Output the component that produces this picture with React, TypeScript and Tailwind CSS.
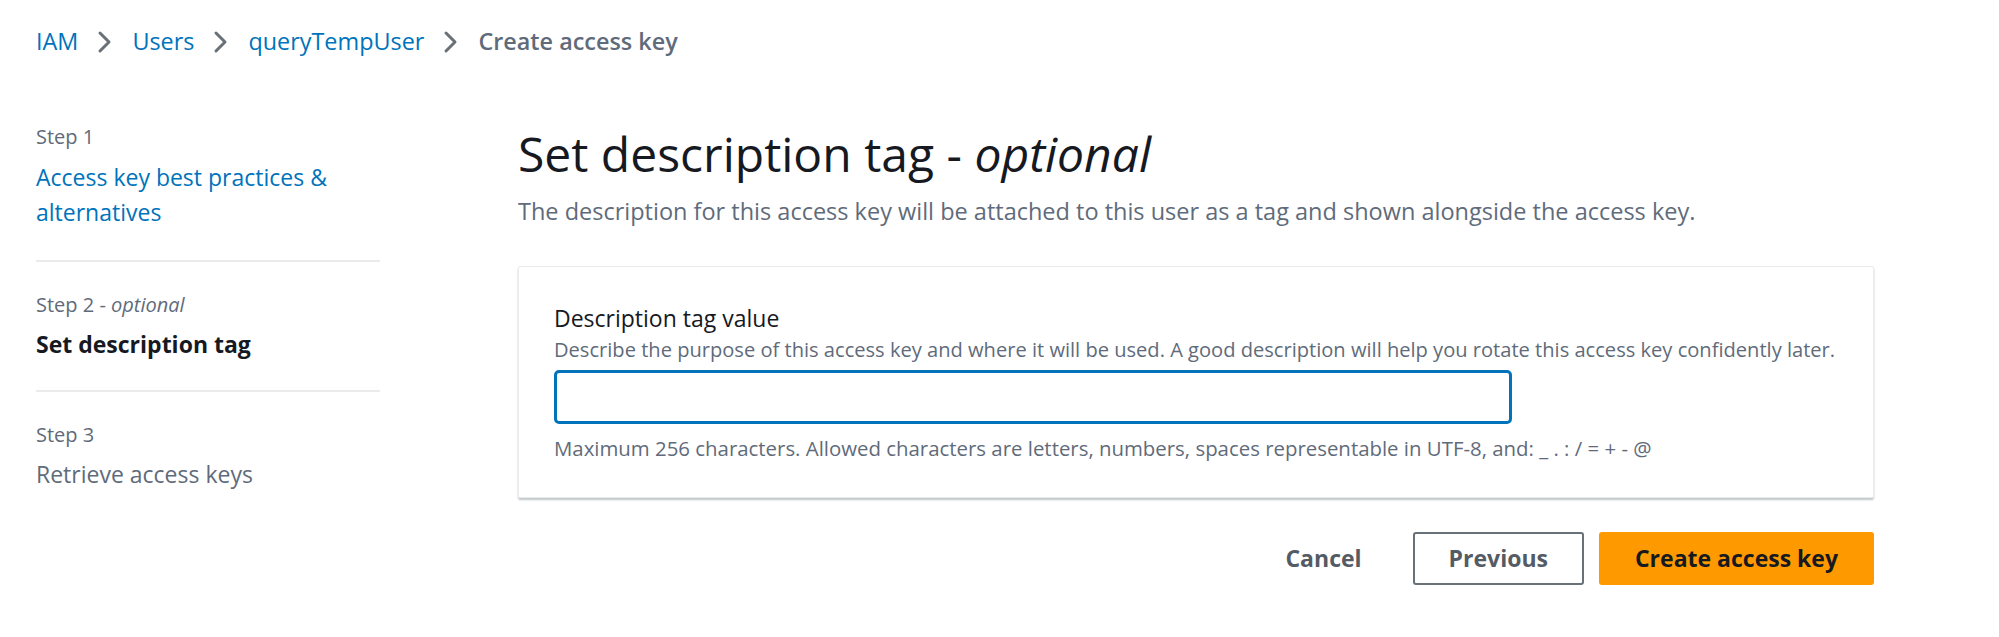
import React from "react";

const Chevron = () => (
  <svg width="16" height="24" viewBox="0 0 16 24" className="mx-[19px] shrink-0">
    <path d="M3 3 L12 12 L3 21" fill="none" stroke="#687078" strokeWidth="3" strokeLinecap="round" strokeLinejoin="round" />
  </svg>
);

export default function App() {
  return (
    <div className="w-[1999px] h-[637px] bg-white text-[#16191f] font-['Open_Sans',sans-serif] overflow-hidden">
      {/* Breadcrumb */}
      <nav className="flex items-center pl-[36px] pt-[24px] h-[59px] text-[23.4px] leading-[35px]">
        <span className="text-[#0073bb]">IAM</span>
        <Chevron />
        <span className="text-[#0073bb]">Users</span>
        <Chevron />
        <span className="text-[#0073bb]">queryTempUser</span>
        <Chevron />
        <span className="text-[#5f6b7a] font-semibold">Create access key</span>
      </nav>

      <div className="flex pl-[36px]">
        {/* Steps */}
        <aside className="w-[344px] shrink-0 pt-[64px]">
          <div className="flex flex-col gap-[9px] pb-[30px] border-b-2 border-[#e9ebed]">
            <div className="text-[20px] leading-[28px] text-[#5f6b7a]">Step 1</div>
            <div className="text-[23px] leading-[35px] text-[#0073bb]">Access key best practices &amp; alternatives</div>
          </div>
          <div className="flex flex-col gap-[8px] pt-[29px] pb-[28px] border-b-2 border-[#e9ebed]">
            <div className="text-[20px] leading-[28px] text-[#5f6b7a]">
              Step 2 - <i>optional</i>
            </div>
            <div className="text-[23px] leading-[35px] font-bold text-[#16191f]">Set description tag</div>
          </div>
          <div className="flex flex-col gap-[8px] pt-[29px]">
            <div className="text-[20px] leading-[28px] text-[#5f6b7a]">Step 3</div>
            <div className="text-[23px] leading-[35px] text-[#5f6b7a]">Retrieve access keys</div>
          </div>
        </aside>

        {/* Main */}
        <main className="ml-[138px] w-[1356px] pt-[67px]">
          <h1 className="text-[48px] leading-[56px] font-normal">
            Set description tag - <i>optional</i>
          </h1>
          <p className="mt-[12px] text-[23.5px] leading-[35px] text-[#5f6b7a]">
            The description for this access key will be attached to this user as a tag and shown alongside the access key.
          </p>

          <div className="mt-[37px] border border-[#e9ebed] shadow-[0_2px_2px_rgba(0,28,36,0.25)] rounded-[2px] pl-[35px] pr-[35px] pt-[34px] pb-[35px]">
            <div className="text-[23px] leading-[35px]">Description tag value</div>
            <div className="text-[20.1px] leading-[28px] text-[#5f6b7a]">
              Describe the purpose of this access key and where it will be used. A good description will help you rotate this access key confidently later.
            </div>
            <input
              type="text"
              className="mt-[6px] block w-[958px] h-[54px] border-[3px] border-[#0073bb] rounded-[5px] outline-none px-[14px] text-[23px]"
            />
            <div className="mt-[10px] text-[20.4px] leading-[28px] text-[#5f6b7a]">
              Maximum 256 characters. Allowed characters are letters, numbers, spaces representable in UTF-8, and: _ . : / = + - @
            </div>
          </div>

          <div className="mt-[34px] flex justify-end items-center gap-[15px]">
            <button className="h-[53px] px-[36px] text-[23px] font-bold text-[#545b64]">Cancel</button>
            <button className="h-[53px] px-[34px] border-2 border-[#687078] rounded-[3px] text-[23px] font-bold text-[#545b64]">Previous</button>
            <button className="h-[53px] px-[36px] bg-[#ff9900] rounded-[3px] text-[23px] font-bold text-[#16191f]">Create access key</button>
          </div>
        </main>
      </div>
    </div>
  );
}
